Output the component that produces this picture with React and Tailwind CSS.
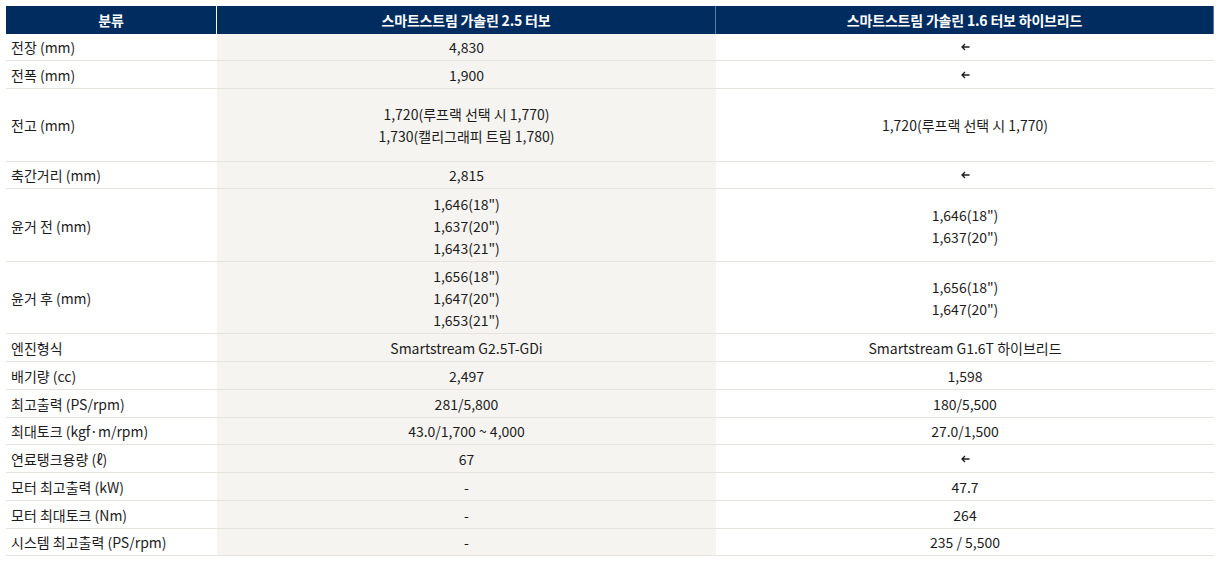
const rows = [
  { label: '전장 (mm)', a: ['4,830'], b: ['←'] },
  { label: '전폭 (mm)', a: ['1,900'], b: ['←'] },
  { label: '전고 (mm)', a: ['1,720(루프랙 선택 시 1,770)', '1,730(캘리그래피 트림 1,780)'], b: ['1,720(루프랙 선택 시 1,770)'], tall: true },
  { label: '축간거리 (mm)', a: ['2,815'], b: ['←'] },
  { label: '윤거 전 (mm)', a: ['1,646(18")', '1,637(20")', '1,643(21")'], b: ['1,646(18")', '1,637(20")'], tall: true },
  { label: '윤거 후 (mm)', a: ['1,656(18")', '1,647(20")', '1,653(21")'], b: ['1,656(18")', '1,647(20")'], tall: true },
  { label: '엔진형식', a: ['Smartstream G2.5T-GDi'], b: ['Smartstream G1.6T 하이브리드'] },
  { label: '배기량 (cc)', a: ['2,497'], b: ['1,598'] },
  { label: '최고출력 (PS/rpm)', a: ['281/5,800'], b: ['180/5,500'] },
  { label: '최대토크 (kgf·m/rpm)', a: ['43.0/1,700 ~ 4,000'], b: ['27.0/1,500'] },
  { label: '연료탱크용량 (ℓ)', a: ['67'], b: ['←'] },
  { label: '모터 최고출력 (kW)', a: ['-'], b: ['47.7'] },
  { label: '모터 최대토크 (Nm)', a: ['-'], b: ['264'] },
  { label: '시스템 최고출력 (PS/rpm)', a: ['-'], b: ['235 / 5,500'] },
]

// same-as-left marker
const Arrow = () => (
  <svg width="9" height="8" viewBox="0 0 9 8" className="my-[7px]" aria-label="←">
    <path d="M8.5 4H1.2M4 1 1 4l3 3" fill="none" stroke="#1c1c1c" strokeWidth="1.3" />
  </svg>
)

function Cell({ lines }) {
  return lines.map((t, i) => (t === '←' ? <Arrow key={i} /> : <div key={i}>{t}</div>))
}

export default function App() {
  return (
    <div className="bg-white w-[1220px] h-[569px] pt-[6px] px-[6px] text-[14px] text-[#1c1c1c]"
      style={{ fontFamily: '"Noto Sans CJK KR", "Noto Sans", sans-serif' }}>
      <div className="grid grid-cols-[211px_499px_498px] h-[27.5px] bg-[#002c5f] text-white font-bold leading-[22px]">
        <div className="flex items-center justify-center border-r border-white tracking-[-0.2px]">분류</div>
        <div className="flex items-center justify-center border-r border-[#5d7ba0] tracking-[-0.2px]">스마트스트림 가솔린 2.5 터보</div>
        <div className="flex items-center justify-center border-r border-[#5d7ba0] tracking-[-0.2px]">스마트스트림 가솔린 1.6 터보 하이브리드</div>
      </div>
      {rows.map(r => (
        <div key={r.label}
          className={`grid grid-cols-[211px_499px_498px] border-b border-[#e6e3de] leading-[22px] ${r.tall ? 'h-[72.5px]' : 'h-[27.75px]'}`}>
          <div className="flex items-center pl-[5px] pt-[1px]">{r.label}</div>
          <div className="flex flex-col items-center justify-center bg-[#f5f4f0] pt-[1px]"><Cell lines={r.a} /></div>
          <div className="flex flex-col items-center justify-center pt-[1px]"><Cell lines={r.b} /></div>
        </div>
      ))}
    </div>
  )
}
